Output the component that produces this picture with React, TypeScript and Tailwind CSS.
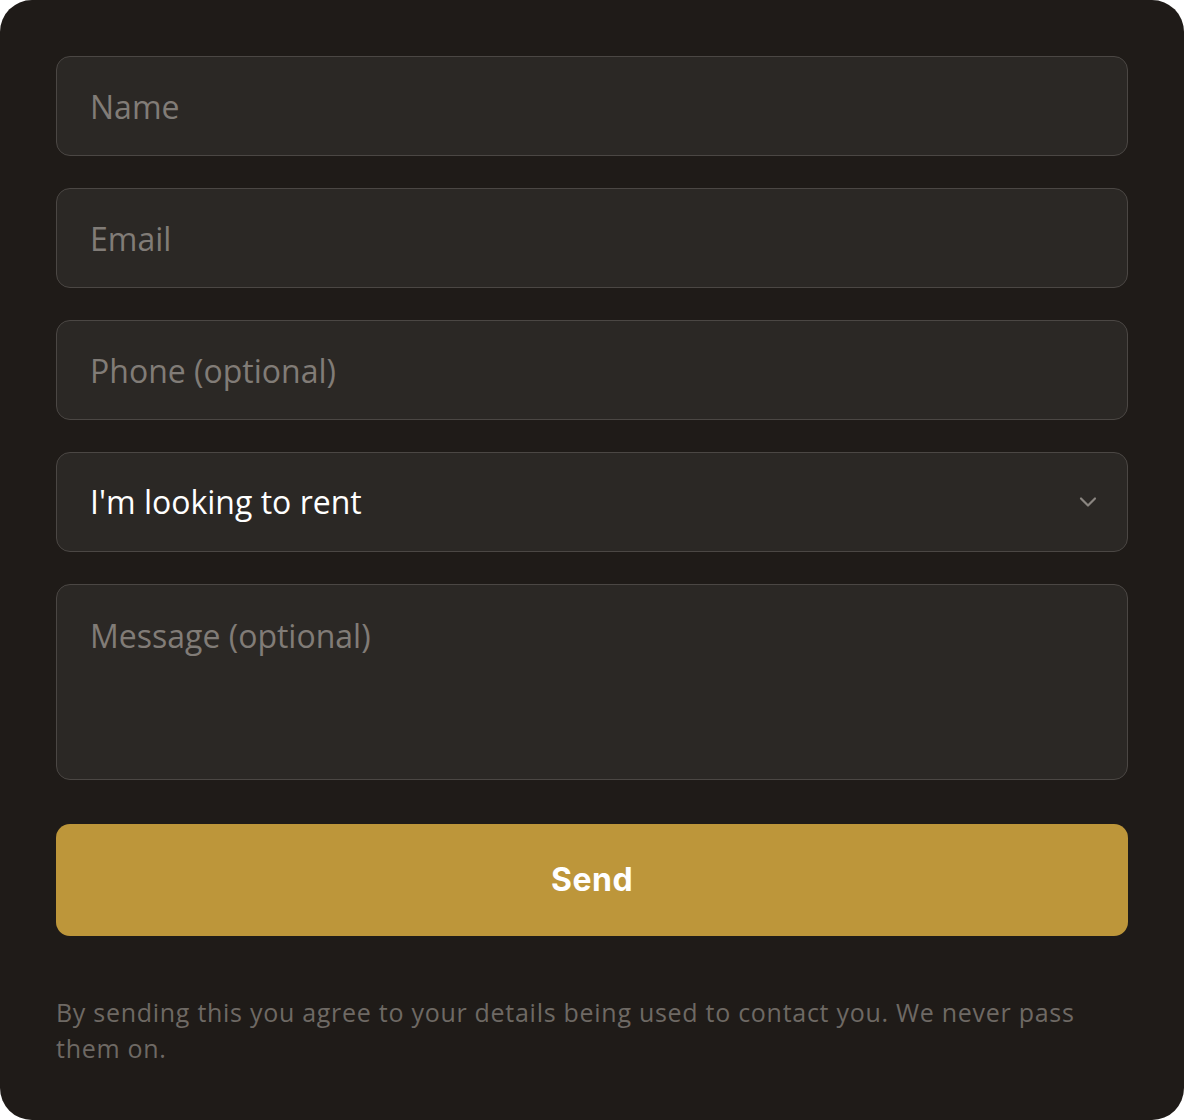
import React from "react";

const field =
  "block w-full h-[100px] rounded-[14px] border border-[#4b4744] bg-[#2b2825] px-[33px] text-[32px] text-white placeholder:text-[#817c77] outline-none";

export default function App() {
  return (
    <div className="w-[1184px] h-[1120px] bg-white">
      <div
        className="w-[1184px] h-[1120px] rounded-[32px] bg-[#1f1b18] px-[56px] pt-[56px]"
        style={{ fontFamily: "'Open Sans', Lato, sans-serif" }}
      >
        <div className="flex flex-col gap-[32px]">
          <input className={field} placeholder="Name" readOnly />
          <input className={field} placeholder="Email" readOnly />
          <input className={field} placeholder="Phone (optional)" readOnly />
          <div className="flex items-center justify-between h-[100px] rounded-[14px] border border-[#4b4744] bg-[#2b2825] pl-[33px] pr-[30px]">
            <span className="text-[32px] text-white">I'm looking to rent</span>
            <svg width="18" height="12" viewBox="0 0 18 12" fill="none">
              <path d="M2 2.5l7 7 7-7" stroke="#8a8580" strokeWidth="2.2" strokeLinecap="round" strokeLinejoin="round" />
            </svg>
          </div>
          <textarea
            className="block w-full h-[196px] resize-none rounded-[14px] border border-[#4b4744] bg-[#2b2825] px-[33px] pt-[29px] text-[32px] leading-[44px] text-white placeholder:text-[#817c77] outline-none"
            placeholder="Message (optional)"
            readOnly
          />
        </div>
        <button
          className="mt-[44px] flex w-full h-[112px] items-center justify-center rounded-[14px] bg-[#bd963a] text-[32px] font-bold tracking-[0.5px] text-white"
          style={{ fontFamily: "Inter, sans-serif" }}
        >
          Send
        </button>
        <p className="mt-[58px] text-[25px] leading-[36px] tracking-[0.72px] text-[#6e6964]">
          By sending this you agree to your details being used to contact you. We never pass them on.
        </p>
      </div>
    </div>
  );
}
